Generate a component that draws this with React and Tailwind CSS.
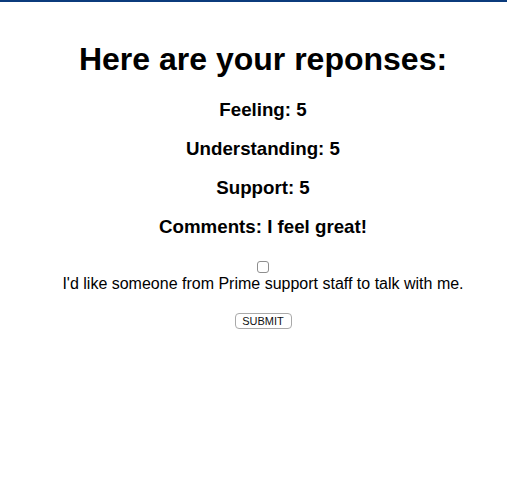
const responses = [
  { label: "Feeling", value: 5 },
  { label: "Understanding", value: 5 },
  { label: "Support", value: 5 },
  { label: "Comments", value: "I feel great!" },
];

const App = () => {
  return (
    <div className="min-h-[484px] bg-white text-black font-['Liberation_Sans',Arial,sans-serif]">
      <div className="h-[2px] bg-[#0b3b7c]" />
      <div className="pl-[19px] flex flex-col items-center text-center">
        <h1 className="mt-[39px] text-[32px] leading-[37px] font-bold">Here are your reponses:</h1>
        <div className="mt-[21px] flex flex-col items-center gap-[18px]">
          {responses.map((r) => (
            <h3 key={r.label} className="text-[18.72px] leading-[21px] font-bold">
              {r.label}: {r.value}
            </h3>
          ))}
        </div>
        <input
          type="checkbox"
          className="mt-[24px] w-[12px] h-[12px] appearance-none border border-[#8e8e8e] rounded-[3px] bg-white"
        />
        <p className="mt-[2px] text-[16px] leading-[18px]">I'd like someone from Prime support staff to talk with me.</p>
        <button className="mt-[20px] w-[57px] h-[16px] flex items-center justify-center border border-[#a9a9a9] rounded-[4px] bg-white text-[11px] leading-none text-[#111]">
          SUBMIT
        </button>
      </div>
    </div>
  );
};

export default App;
